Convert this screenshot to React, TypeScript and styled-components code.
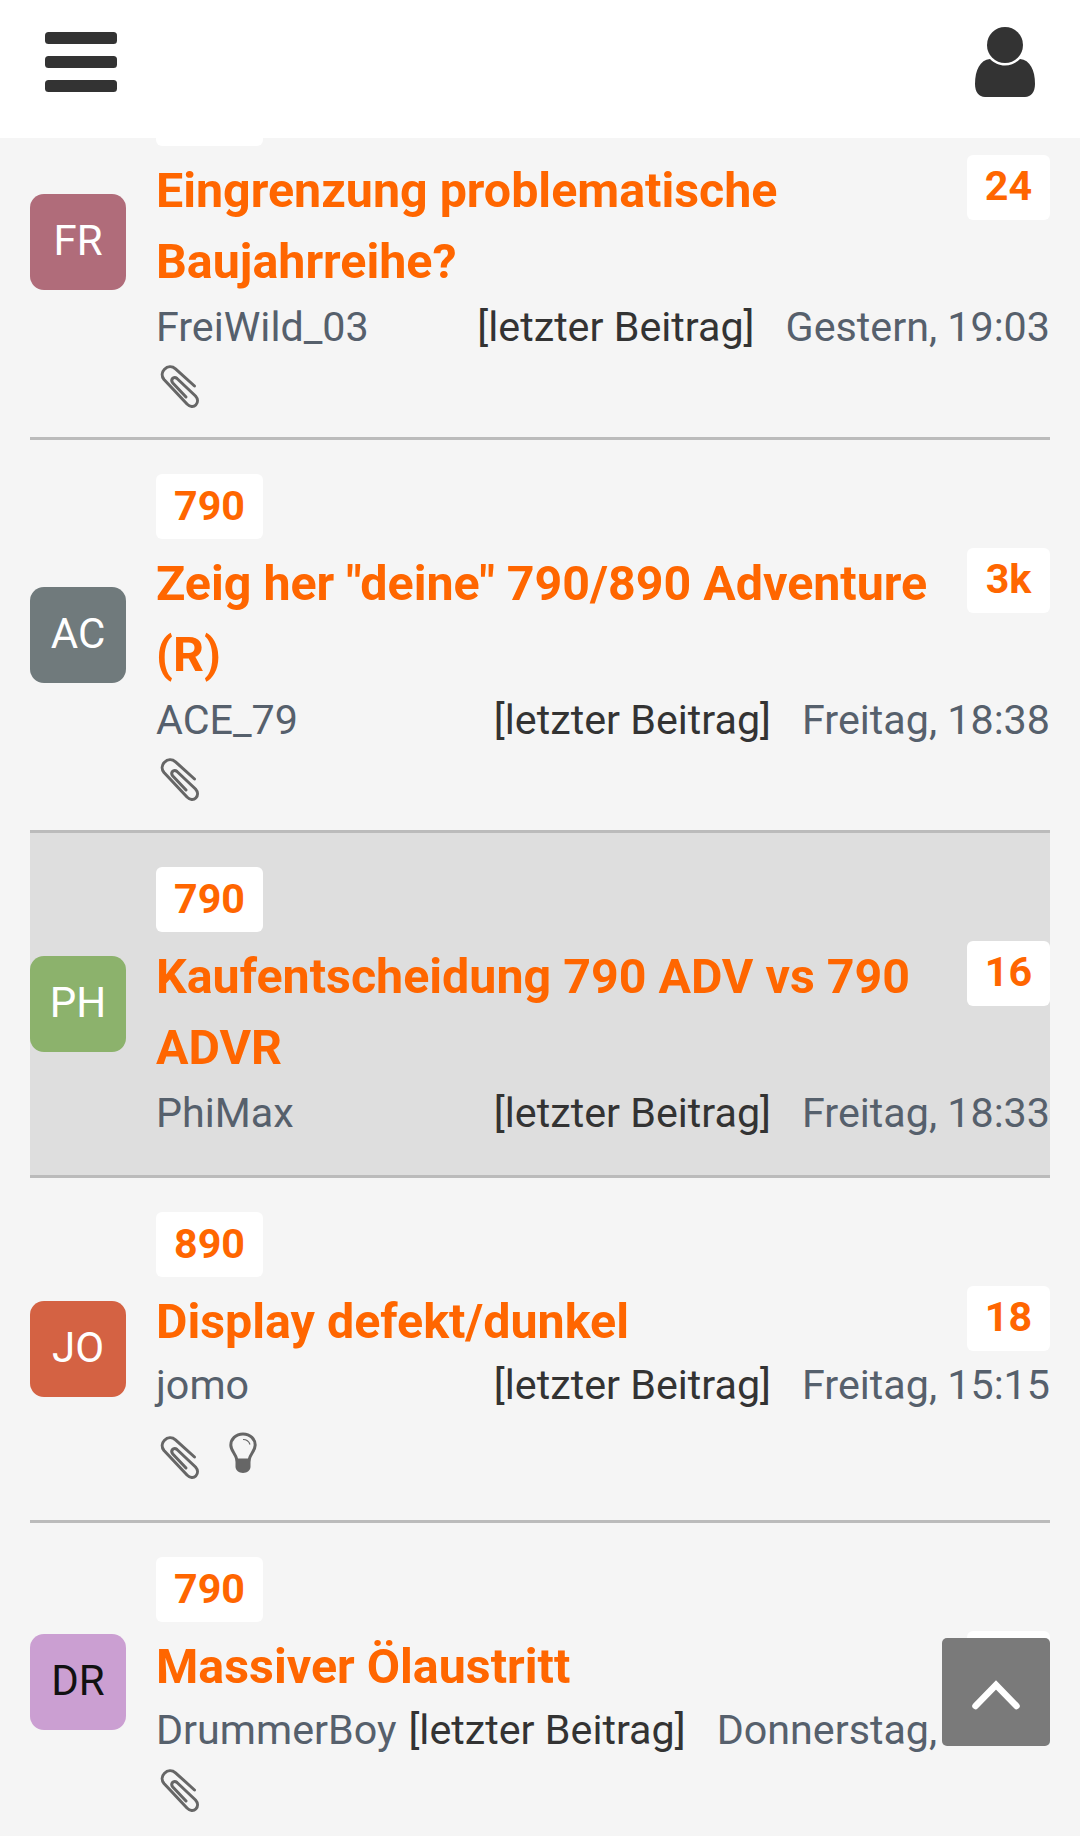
import React from "react";
import styled, { createGlobalStyle } from "styled-components";

const GlobalStyle = createGlobalStyle`
  html, body {
    margin: 0;
    padding: 0;
    background: #f5f5f5;
    font-family: Roboto, "Liberation Sans", sans-serif;
  }
`;

const Page = styled.div`
  position: relative;
  width: 1080px;
  height: 1836px;
  overflow: hidden;
  background: #f5f5f5;
`;

const Header = styled.header`
  position: relative;
  z-index: 2;
  height: 138px;
  background: #fff;
  display: flex;
  justify-content: space-between;
  align-items: flex-start;
  padding: 26px 45px 0;
  box-sizing: border-box;
`;

const IconSlot = styled.div`
  color: #333;
  line-height: 0;
`;

const List = styled.div`
  margin: -91px 30px 0;
`;

const Row = styled.div<{ $active?: boolean }>`
  display: flex;
  align-items: center;
  border-bottom: 3px solid #bbb;
  background: ${(p) => (p.$active ? "#dedede" : "transparent")};
  padding: 34px 0;
`;

const Avatar = styled.div<{ $bg: string; $fg?: string }>`
  flex: none;
  width: 96px;
  height: 96px;
  padding-bottom: 3px;
  box-sizing: border-box;
  border-radius: 14px;
  background: ${(p) => p.$bg};
  color: ${(p) => p.$fg || "#fff"};
  font-size: 42px;
  display: flex;
  align-items: center;
  justify-content: center;
`;

const Body = styled.div`
  flex: 1;
  min-width: 0;
  margin-left: 30px;
`;

const Tag = styled.span`
  display: block;
  width: 107px;
  height: 65px;
  line-height: 64px;
  text-align: center;
  background: #fff;
  border-radius: 6px;
  color: #f60;
  font-size: 41.25px;
  font-weight: 700;
`;

const TitleRow = styled.div`
  display: flex;
  justify-content: space-between;
  align-items: flex-start;
  margin-top: 9px;
`;

const Title = styled.a`
  font-size: 48.375px;
  line-height: 71px;
  font-weight: 700;
  color: #f60;
  padding-right: 30px;
`;

const Count = styled.span`
  flex: none;
  width: 83px;
  height: 65px;
  line-height: 63px;
  text-align: center;
  background: #fff;
  border-radius: 6px;
  color: #f60;
  font-size: 41.25px;
  font-weight: 700;
`;

const Meta = styled.div<{ $short?: boolean }>`
  display: flex;
  justify-content: space-between;
  font-size: 41.25px;
  line-height: 56px;
  margin: ${(p) => (p.$short ? "0 0 1px" : "2px 0 0")};
  white-space: nowrap;
`;

const Author = styled.span`
  color: #56606c;
`;

const Latest = styled.span`
  color: #333;
  margin-left: 12px;
`;

const When = styled.span`
  color: #56606c;
  margin-left: 31px;
`;

const Info = styled.div`
  display: flex;
`;

const Flags = styled.div<{ $tall?: boolean }>`
  display: flex;
  align-items: flex-start;
  gap: 28px;
  height: ${(p) => (p.$tall ? "72px" : "48px")};
  color: #666;
  padding: ${(p) => (p.$tall ? "22px" : "10px")} 0 0 4px;
  box-sizing: border-box;
`;

const ScrollTop = styled.button`
  position: absolute;
  z-index: 3;
  right: 30px;
  top: 1638px;
  width: 108px;
  height: 108px;
  border: 0;
  border-radius: 5px;
  padding: 0;
  background: #7a7a7a;
  color: #fff;
  display: flex;
  align-items: center;
  justify-content: center;
`;

function MenuIcon() {
  return (
    <svg width="72" height="62" viewBox="0 0 72 62" fill="currentColor" style={{ marginTop: 6 }}>
      <rect x="0" y="0" width="72" height="12" rx="3.5" />
      <rect x="0" y="24" width="72" height="12" rx="3.5" />
      <rect x="0" y="48" width="72" height="12" rx="3.5" />
    </svg>
  );
}

function UserIcon() {
  return (
    <svg width="60" height="72" viewBox="0 0 60 72" fill="currentColor">
      <circle cx="30" cy="19" r="18" />
      <path d="M15 33C19 37 24 39.500 30 39.500S41 37 45 33C55 34 60 44 60 58c0 8-4 13-10 13H10C4 71 0 66 0 58 0 44 5 34 15 33z" />
    </svg>
  );
}

function ClipIcon() {
  return (
    <svg width="40" height="44" viewBox="0 0 40 44" fill="none" stroke="currentColor" strokeWidth="3" strokeLinecap="round" strokeLinejoin="round" style={{ flex: "none" }}>
      <path d="M34.500 21 15.500 3.800C12 .8 7.500 1.200 4.500 4.200 1.500 7.200 1.500 11.500 4 14.500L27 39c3 3 6.500 3.300 8.800 1 2.400-2.500 2.200-6.200-.3-9L17 13.500c-1.500-1.300-3.500-1.300-4.500 0s-.9 3.100.3 4.500L26 32" />
    </svg>
  );
}

function BulbIcon() {
  return (
    <svg width="30" height="42" viewBox="0 0 30 42" style={{ flex: "none", marginTop: -4 }}>
      <path d="M15 2C7.500 2 2.800 7.500 2.800 13c0 6 5.200 9 6.200 15h12c1-6 6.200-9 6.200-15C27.200 7.500 22.500 2 15 2z" fill="none" stroke="currentColor" strokeWidth="3" />
      <path d="M7.500 27h15v8c0 3-3.500 6-7.500 6s-7.500-3-7.500-6z" fill="currentColor" />
      <path d="M15 7.500c3 0 6 2 7 5" fill="none" stroke="currentColor" strokeWidth="1.200" />
    </svg>
  );
}

function ChevronIcon() {
  return (
    <svg width="48" height="30" viewBox="0 0 48 30" fill="none" stroke="#fff" strokeWidth="6.500" strokeLinecap="round" strokeLinejoin="miter" style={{ marginTop: 5 }}>
      <path d="M3.500 26 24 5l20.500 21" />
    </svg>
  );
}

type Topic = {
  tag: string;
  title: string;
  count: string;
  user: string;
  initials: string;
  color: string;
  fg?: string;
  when: string;
  short?: boolean;
  clip?: boolean;
  bulb?: boolean;
  active?: boolean;
};

const topics: Topic[] = [
  { tag: "790", title: "Eingrenzung problematische Baujahrreihe?", count: "24", user: "FreiWild_03", initials: "FR", color: "#b06c7a", when: "Gestern, 19:03", clip: true },
  { tag: "790", title: 'Zeig her "deine" 790/890 Adventure (R)', count: "3k", user: "ACE_79", initials: "AC", color: "#707a7c", when: "Freitag, 18:38", clip: true },
  { tag: "790", title: "Kaufentscheidung 790 ADV vs 790 ADVR", count: "16", user: "PhiMax", initials: "PH", color: "#8cb26c", when: "Freitag, 18:33", active: true },
  { tag: "890", title: "Display defekt/dunkel", count: "18", user: "jomo", initials: "JO", color: "#d46243", when: "Freitag, 15:15", short: true, clip: true, bulb: true },
  { tag: "790", title: "Massiver Ölaustritt", count: "9", user: "DrummerBoy", initials: "DR", color: "#cb9fd2", fg: "#111", when: "Donnerstag, 20:12", short: true, clip: true },
];

export default function App() {
  return (
    <Page>
      <GlobalStyle />
      <Header>
        <IconSlot><MenuIcon /></IconSlot>
        <IconSlot><UserIcon /></IconSlot>
      </Header>
      <List>
        {topics.map((t) => (
          <Row key={t.user} $active={t.active}>
            <Avatar $bg={t.color} $fg={t.fg}>{t.initials}</Avatar>
            <Body>
              <Tag>{t.tag}</Tag>
              <TitleRow>
                <Title>{t.title}</Title>
                <Count>{t.count}</Count>
              </TitleRow>
              <Meta $short={t.short}>
                <Author>{t.user}</Author>
                <Info>
                  <Latest>[letzter Beitrag]</Latest>
                  <When>{t.when}</When>
                </Info>
              </Meta>
              {(t.clip || t.bulb) && (
                <Flags $tall={t.bulb}>
                  {t.clip && <ClipIcon />}
                  {t.bulb && <BulbIcon />}
                </Flags>
              )}
            </Body>
          </Row>
        ))}
      </List>
      <ScrollTop aria-label="nach oben"><ChevronIcon /></ScrollTop>
    </Page>
  );
}
